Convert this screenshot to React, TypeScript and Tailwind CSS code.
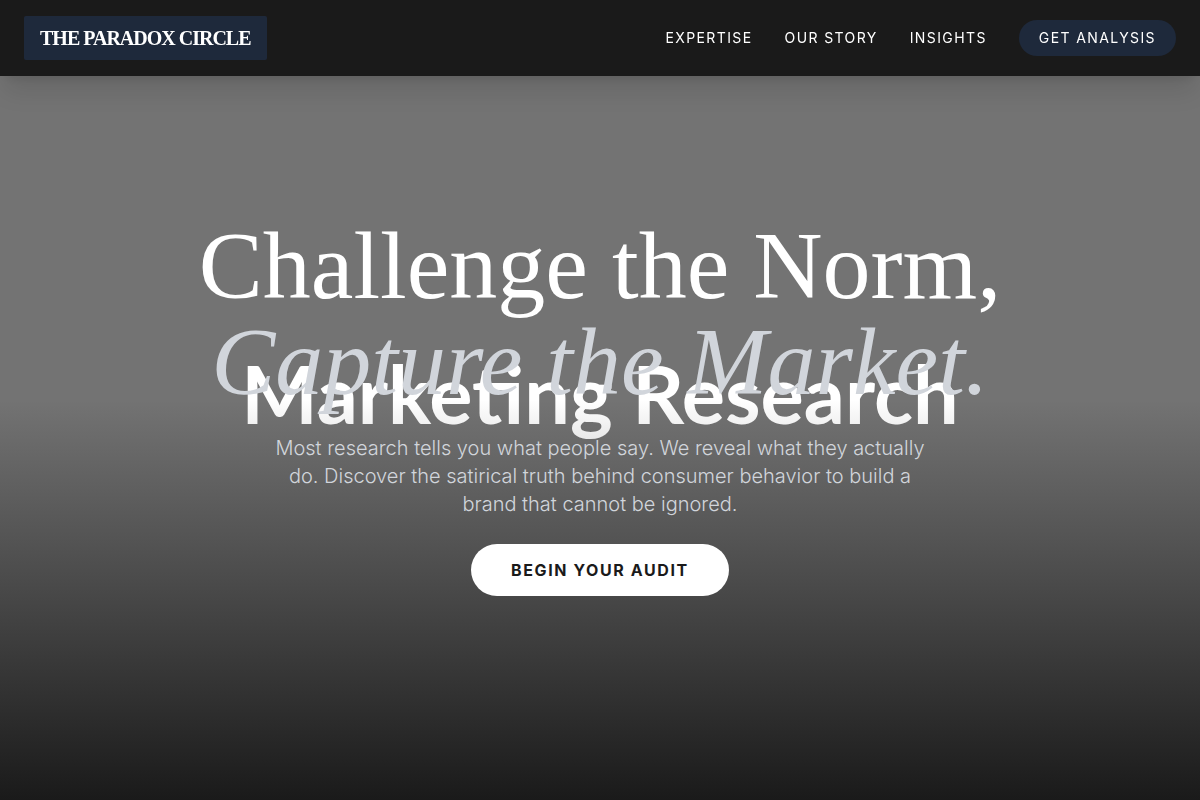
import * as React from "react";

interface NavLink {
  label: string;
  href: string;
}

const navLinks: NavLink[] = [
  { label: "Expertise", href: "#expertise" },
  { label: "Our Story", href: "#story" },
  { label: "Insights", href: "#insights" },
];

function Header() {
  return (
    <header className="fixed inset-x-0 top-0 z-50 flex items-center justify-between bg-[#1a1a1a] px-6 py-4 text-white shadow-xl">
      <a
        href="#home"
        className="rounded-[2px] bg-[#1e293b] px-4 py-2 font-['Liberation_Serif',serif] text-xl font-bold uppercase tracking-tighter"
      >
        The Paradox Circle
      </a>
      <nav className="flex items-center gap-8 text-sm uppercase tracking-widest">
        {navLinks.map((link) => (
          <a key={link.href} href={link.href} className="hover:text-gray-300">
            {link.label}
          </a>
        ))}
        <a href="#contact" className="rounded-full bg-[#1e293b] px-5 py-2 hover:bg-slate-700">
          Get Analysis
        </a>
      </nav>
    </header>
  );
}

function HeroBackdrop() {
  return (
    <div className="absolute inset-0 flex items-center justify-center bg-[#737373] pb-4">
      <span className="whitespace-nowrap font-['Lato',sans-serif] text-[81px] font-bold leading-none text-white">
        Marketing Research
      </span>
      <div className="absolute inset-0 bg-linear-to-t from-[#1a1a1a] to-transparent to-50%" />
    </div>
  );
}

function Hero() {
  return (
    <section id="home" className="relative flex min-h-screen items-center justify-center overflow-hidden">
      <HeroBackdrop />
      <div className="relative z-10 max-w-4xl px-6 text-center">
        <h1 className="mb-6 font-['Liberation_Serif',serif] text-8xl leading-none text-white">
          Challenge the Norm,
          <br />
          <em className="text-[#d1d5db]">Capture the Market.</em>
        </h1>
        <p className="mx-auto mb-10 max-w-2xl text-xl font-light text-[#d1d5db]">
          Most research tells you what people say. We reveal what they actually do. Discover the satirical truth
          behind consumer behavior to build a brand that cannot be ignored.
        </p>
        <a
          href="#contact"
          className="rounded-full bg-white px-10 py-4 font-bold uppercase tracking-widest text-[#1a1a1a] hover:bg-gray-200"
        >
          Begin Your Audit
        </a>
      </div>
    </section>
  );
}

export default function App() {
  return (
    <div className="bg-[#1a1a1a] font-['Inter',sans-serif]">
      <Header />
      <main>
        <Hero />
      </main>
    </div>
  );
}
